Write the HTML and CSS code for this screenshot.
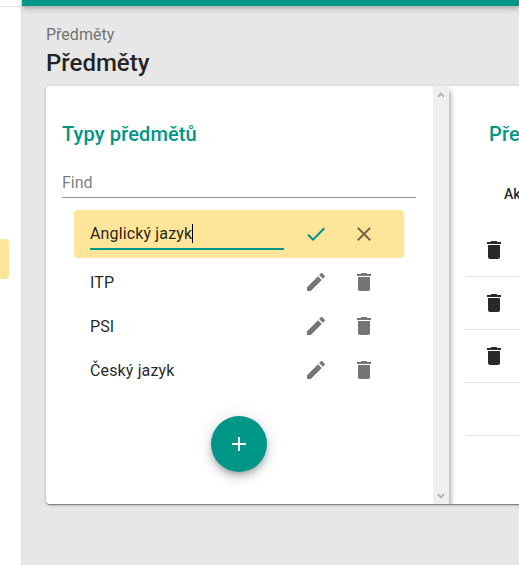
FILE: index.html
```html
<!DOCTYPE html>
<html lang="cs">
<head>
<meta charset="utf-8">
<title>Předměty</title>
<link rel="stylesheet" href="styles.css">
</head>
<body>
<svg class="symbols" width="0" height="0">
  <symbol id="pencil" viewBox="0 0 24 24"><path d="M20.71 7.04c.39-.39.39-1.04 0-1.41l-2.34-2.34c-.37-.39-1.02-.39-1.41 0l-1.84 1.83 3.75 3.75M3 17.25V21h3.75L17.81 9.93l-3.75-3.75L3 17.25z"/></symbol>
  <symbol id="trash" viewBox="0 0 24 24"><path d="M19 4h-3.5l-1-1h-5l-1 1H5v2h14M6 19a2 2 0 0 0 2 2h8a2 2 0 0 0 2-2V7H6v12z"/></symbol>
  <symbol id="check" viewBox="0 0 24 24"><path d="M21 7 9 19l-5.500-5.500 1.410-1.410L9 16.170 19.590 5.590 21 7z"/></symbol>
  <symbol id="close" viewBox="0 0 24 24"><path d="M19 6.410 17.590 5 12 10.590 6.410 5 5 6.410 10.590 12 5 17.590 6.410 19 12 13.410 17.590 19 19 17.590 13.410 12 19 6.410z"/></symbol>
  <symbol id="plus" viewBox="0 0 24 24"><path d="M19 13h-6v6h-2v-6H5v-2h6V5h2v6h6v2z"/></symbol>
</svg>
<div class="app">
  <aside class="sidebar">
    <div class="sidebar-head"></div>
    <div class="sidebar-active"></div>
  </aside>
  <main class="main">
    <div class="toolbar"></div>
    <div class="content">
      <div class="breadcrumb">Předměty</div>
      <h1 class="title">Předměty</h1>
      <div class="card">
        <section class="types">
          <div class="types-body">
            <h2 class="heading">Typy předmětů</h2>
            <div class="find">Find</div>
            <ul class="list">
              <li class="row editing">
                <div class="field"><span class="value">Anglický jazyk</span></div>
                <svg class="icon ok"><use href="#check"/></svg>
                <svg class="icon"><use href="#close"/></svg>
              </li>
              <li class="row"><span class="name">ITP</span><svg class="icon"><use href="#pencil"/></svg><svg class="icon"><use href="#trash"/></svg></li>
              <li class="row"><span class="name">PSI</span><svg class="icon"><use href="#pencil"/></svg><svg class="icon"><use href="#trash"/></svg></li>
              <li class="row"><span class="name">Český jazyk</span><svg class="icon"><use href="#pencil"/></svg><svg class="icon"><use href="#trash"/></svg></li>
            </ul>
            <div class="fab"><svg class="icon"><use href="#plus"/></svg></div>
          </div>
          <div class="scrollbar">
            <svg class="arrow" viewBox="0 0 8 6"><path d="M1 4.700 4 1.700l3 3"/></svg>
            <svg class="arrow" viewBox="0 0 8 6"><path d="M1 1.300l3 3 3-3"/></svg>
          </div>
        </section>
        <section class="subjects">
          <h2 class="heading">Předměty</h2>
          <div class="table">
            <div class="thead">Akce</div>
            <div class="cell"><svg class="icon"><use href="#trash"/></svg></div>
            <div class="cell"><svg class="icon"><use href="#trash"/></svg></div>
            <div class="cell"><svg class="icon"><use href="#trash"/></svg></div>
            <div class="cell"></div>
          </div>
        </section>
      </div>
    </div>
  </main>
</div>
</body>
</html>
```
FILE: styles.css
```css
* { box-sizing: border-box; }
body {
  margin: 0;
  overflow: hidden;
  font: 16px/24px Roboto, "Liberation Sans", sans-serif;
  color: rgba(0, 0, 0, .87);
}
.symbols { position: absolute; }
.app { display: flex; height: 565px; width: 519px; overflow: hidden; }
.sidebar { flex: none; width: 22px; background: #fff; border-right: 1px solid #ddd; }
.sidebar-head { height: 7px; border-bottom: 1px solid #e0e0e0; }
.sidebar-active { width: 9px; height: 40px; margin-top: 232px; background: #ffe599; border-radius: 0 4px 4px 0; }
.main { flex: 1; min-width: 0; background: #e7e7e7; }
.toolbar { height: 6px; background: #009688; box-shadow: 0 2px 4px -1px rgba(0,0,0,.2), 0 4px 5px rgba(0,0,0,.1), 0 1px 8px rgba(0,0,0,.08); }
.content { padding: 17px 0 0 24px; }
.breadcrumb { color: rgba(0, 0, 0, .54); }
.title { margin: 0; font-size: 24px; line-height: 32px; font-weight: 500; height: 39px; }
.card {
  display: flex;
  width: 900px;
  height: 418px;
  background: #fff;
  border-radius: 4px;
  box-shadow: 0 2px 1px -1px rgba(0,0,0,.2), 0 1px 1px rgba(0,0,0,.14), 0 1px 3px rgba(0,0,0,.3);
}
.types { display: flex; flex: none; width: 403px; box-shadow: 3px 4px 5px -1px rgba(0,0,0,.32); clip-path: inset(0 -12px 0 0); border-radius: 4px 0 0 4px; }
.types-body { flex: 1; padding: 32px 17px 0 16px; background: #fff; border-radius: 4px 0 0 4px; }
.heading { margin: 0; font-size: 20px; line-height: 32px; font-weight: 500; letter-spacing: .13px; color: #009688; }
.find { margin-top: 20px; height: 28px; padding-top: 1px; color: rgba(0, 0, 0, .54); border-bottom: 1px solid #949494; }
.list { list-style: none; margin: 12px 12px 0; padding: 0; }
.row { display: flex; align-items: center; height: 44px; padding: 0 28px 0 16px; letter-spacing: .14px; }
.row.editing { height: 48px; margin-bottom: 2px; background: #ffe599; border-radius: 4px; }
.name, .field { width: 194px; margin-right: -4px; }
.name { padding-top: 2px; }
.field { height: 32px; padding-top: 4px; border-bottom: 2px solid #009688; }
.value { display: inline-block; height: 19px; line-height: 19px; border-right: 1px solid #000; }
.icon { display: block; flex: none; width: 24px; height: 24px; margin-left: 24px; fill: currentColor; color: rgba(0, 0, 0, .54); }
.icon.ok { color: #009688; }
.fab {
  display: flex;
  align-items: center;
  justify-content: center;
  width: 56px;
  height: 56px;
  margin: 24px auto 0;
  border-radius: 50%;
  background: #009688;
  box-shadow: 0 3px 5px -1px rgba(0,0,0,.2), 0 6px 10px rgba(0,0,0,.14), 0 1px 18px rgba(0,0,0,.12);
}
.fab .icon { margin: 0; color: #fff; }
.scrollbar { display: flex; flex-direction: column; align-items: center; justify-content: space-between; width: 16px; padding: 6px 0 5px; background: #efefef; }
.arrow { width: 8px; height: 6px; margin-right: 1px; fill: none; stroke: #b4b4b4; stroke-width: 2; }
.subjects { flex: 1; padding: 32px 16px 0; }
.subjects .heading { padding-left: 24px; }
.thead { height: 74px; padding: 32px 0 0 39px; font-size: 14px; font-weight: 500; }
.cell { height: 53px; padding: 14px 17px; border-bottom: 1px solid #e0e0e0; }
.cell .icon { margin: 0; color: #292929; }
```
